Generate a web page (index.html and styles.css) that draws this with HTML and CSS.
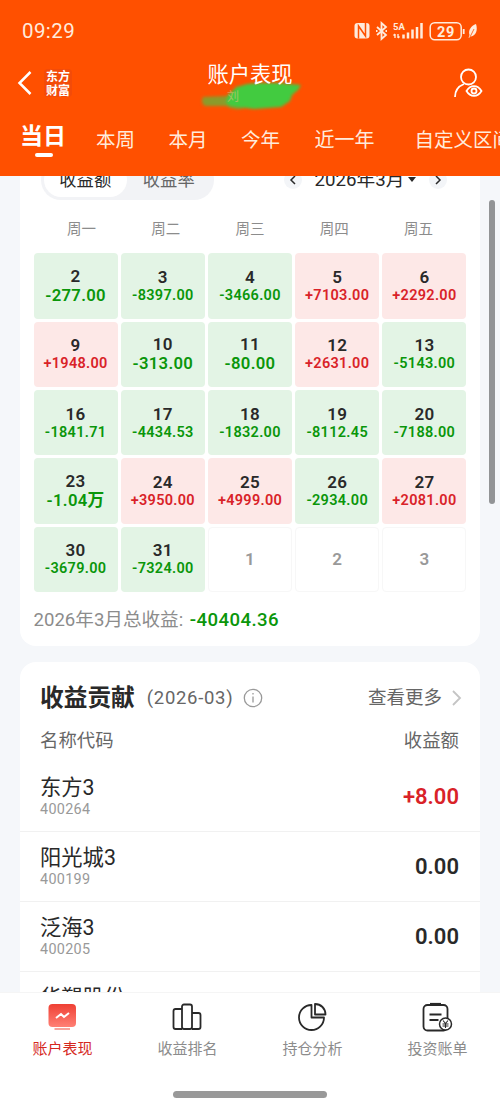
FILE: index.html
```html
<!DOCTYPE html>
<html lang="zh-CN">
<head>
    <meta charset="UTF-8">
    <title>账户表现</title>
    <link rel="stylesheet" href="styles.css">
</head>
<body>

<header class="header">
    <div class="status">
        <span class="time">09:29</span>
        <svg class="status-icons" width="126" height="24" viewBox="0 0 126 24" fill="none" stroke="#ffebdc">
            <rect x="0.500" y="4" width="15" height="15.500" rx="3" fill="#ffebdc" stroke="none"/>
            <path d="M4.500 19.500V7l7 10V4" stroke="#ff5000" stroke-width="1.500"/>
            <path d="M23 8l9 8-4.500 4V4l4.500 4-9 8M22 12h1.500M31.500 12h1.500" stroke-width="1.800"/>
            <path d="M41 15v4M39.500 16.500l1.500-1.500M44 19v-4M44 19l1.500-1.500" stroke-width="1.400"/>
            <path d="M49.500 19.500v-4M54 19.500v-6M58.500 19.500v-9M63 19.500V8M67.500 19.500V4" stroke-width="2.500"/>
            <text x="39" y="11" class="net">5A</text>
            <rect x="76.200" y="3.700" width="31" height="17" rx="4.500" stroke-width="1.500"/>
            <text x="92" y="17.500" class="battery" text-anchor="middle">29</text>
            <path d="M109.700 10v5" stroke-width="1.800"/>
            <path d="M122 5c-5 2-8 6-6.500 11l-1 3 2.500-1.500c5-1 7-6 5-12.500z" fill="#ffebdc" stroke="none"/>
            <path d="M116 18l4-8" stroke="#ff5000" stroke-width=".8"/>
        </svg>
    </div>

    <div class="nav">
        <div class="nav-left">
            <svg width="16" height="26" viewBox="0 0 16 26" fill="none" stroke="#fff" stroke-width="2.500"><path d="M14.500 2L3.500 13l11 11"/></svg>
            <span class="logo">东方<br>财富</span>
        </div>
        <div class="title">
            <h1>账户表现</h1>
            <svg class="scribble" width="108" height="36" viewBox="0 0 108 36">
                <path d="M4 18Q1 24 6 27L27 27Q36 32 46 29L60 14L38 7L28 17Z" fill="#8b9b2b"/>
                <path d="M27 24L29 16L38 8L48 5L60 4L80 4L102 6L99 11L93 16L91 22L82 28L55 30L40 28L31 27Z" fill="#42cb40"/>
            </svg>
            <span class="account">刘</span>
        </div>
        <svg class="user" width="32" height="32" viewBox="0 0 32 32" fill="none" stroke="#fff" stroke-width="1.800">
            <circle cx="16.500" cy="9" r="7.500"/>
            <path d="M3 29c0-7 4-11 9-13"/>
            <path d="M14.500 23c4-6.500 11-6.500 15 0-4 6.500-11 6.500-15 0z"/>
            <circle cx="22" cy="23" r="2.500"/>
        </svg>
    </div>

    <nav class="periods">
        <span class="active">当日</span>
        <span>本周</span>
        <span>本月</span>
        <span>今年</span>
        <span class="long">近一年</span>
        <span class="custom">自定义区间</span>
    </nav>
</header>

<main class="content">
    <section class="card calendar-card">
        <div class="toolbar">
            <div class="switch"><span class="on">收益额</span><span>收益率</span></div>
            <div class="month">
                <span class="arrow"><svg width="8" height="10" viewBox="0 0 8 10"><path d="M6 1L2 5l4 4"/></svg></span>
                <span class="month-name">2026年3月<i></i></span>
                <span class="arrow"><svg width="8" height="10" viewBox="0 0 8 10"><path d="M2 1l4 4-4 4"/></svg></span>
            </div>
        </div>
        <div class="weekdays"><span>周一</span><span>周二</span><span>周三</span><span>周四</span><span>周五</span></div>
        <div class="days">
            <div class="day down big"><b>2</b><span>-277.00</span></div>
            <div class="day down"><b>3</b><span>-8397.00</span></div>
            <div class="day down"><b>4</b><span>-3466.00</span></div>
            <div class="day up"><b>5</b><span>+7103.00</span></div>
            <div class="day up"><b>6</b><span>+2292.00</span></div>
            <div class="day up"><b>9</b><span>+1948.00</span></div>
            <div class="day down big"><b>10</b><span>-313.00</span></div>
            <div class="day down big"><b>11</b><span>-80.00</span></div>
            <div class="day up"><b>12</b><span>+2631.00</span></div>
            <div class="day down"><b>13</b><span>-5143.00</span></div>
            <div class="day down"><b>16</b><span>-1841.71</span></div>
            <div class="day down"><b>17</b><span>-4434.53</span></div>
            <div class="day down"><b>18</b><span>-1832.00</span></div>
            <div class="day down"><b>19</b><span>-8112.45</span></div>
            <div class="day down"><b>20</b><span>-7188.00</span></div>
            <div class="day down big"><b>23</b><span>-1.04万</span></div>
            <div class="day up"><b>24</b><span>+3950.00</span></div>
            <div class="day up"><b>25</b><span>+4999.00</span></div>
            <div class="day down"><b>26</b><span>-2934.00</span></div>
            <div class="day up"><b>27</b><span>+2081.00</span></div>
            <div class="day down"><b>30</b><span>-3679.00</span></div>
            <div class="day down"><b>31</b><span>-7324.00</span></div>
            <div class="day next"><b>1</b></div>
            <div class="day next"><b>2</b></div>
            <div class="day next"><b>3</b></div>
        </div>
        <p class="total">2026年3月总收益: <strong>-40404.36</strong></p>
    </section>

    <section class="card contribution">
        <div class="card-head">
            <h2>收益贡献</h2>
            <span class="range">(2026-03)</span>
            <svg width="20" height="20" viewBox="0 0 20 20" fill="none" stroke="#999" stroke-width="1.300"><circle cx="10" cy="10" r="8.700"/><path d="M10 8.500v6M10 5v1.600"/></svg>
            <span class="more">查看更多</span>
            <svg width="12" height="16" viewBox="0 0 12 16" fill="none" stroke="#c4c4c4" stroke-width="1.800"><path d="M2 1l7 7-7 7"/></svg>
        </div>
        <div class="columns"><span>名称代码</span><span>收益额</span></div>
        <div class="stock"><div><h3>东方3</h3><p>400264</p></div><strong class="gain">+8.00</strong></div>
        <div class="stock"><div><h3>阳光城3</h3><p>400199</p></div><strong>0.00</strong></div>
        <div class="stock"><div><h3>泛海3</h3><p>400205</p></div><strong>0.00</strong></div>
        <div class="stock"><div><h3>华塑股份</h3></div></div>
    </section>
    <div class="scrollbar"></div>
</main>

<footer class="tabbar">
    <div class="tabs">
        <div class="tab current">
            <svg width="32" height="32" viewBox="0 0 32 32" fill="none">
                <defs><linearGradient id="screen" x2="0" y2="1"><stop stop-color="#ef4034"/><stop offset="1" stop-color="#ff8075"/></linearGradient></defs>
                <rect x="2.500" y="3" width="27.500" height="23" rx="4" fill="url(#screen)"/>
                <path d="M10 17l5-4 3 3 5-4" stroke="#fff" stroke-width="2"/>
                <path d="M8.500 28H24" stroke="#f79a91" stroke-width="1.800"/>
            </svg>
            <span>账户表现</span>
        </div>
        <div class="tab">
            <svg width="32" height="32" viewBox="0 0 32 32" fill="none" stroke="#292929" stroke-width="1.800">
                <path d="M11 28H4.500q-2 0-2-2V10q0-2 2-2H11M21 12h6.500q2 0 2 2v12q0 2-2 2H21"/>
                <rect x="11" y="3.500" width="10" height="24.500" rx="2"/>
            </svg>
            <span>收益排名</span>
        </div>
        <div class="tab">
            <svg width="32" height="32" viewBox="0 0 32 32" fill="none" stroke="#292929" stroke-width="1.800" stroke-linejoin="round">
                <path d="M15.500 4A12.500 12.500 0 1 0 28 16.500H15.500z"/>
                <path d="M19 3v10.500h10.500C29.500 7.500 25 3 19 3z"/>
            </svg>
            <span>持仓分析</span>
        </div>
        <div class="tab">
            <svg width="32" height="32" viewBox="0 0 32 32" fill="none" stroke="#292929" stroke-width="1.800">
                <rect x="2.500" y="4" width="24" height="25.500" rx="4"/>
                <path d="M9 3h11" stroke-width="2.200"/>
                <path d="M8.500 13.500h12M8.500 19h9"/>
                <circle cx="24.500" cy="23" r="6" fill="#fff" stroke-width="1.500"/>
                <path d="M22 19.500l2.500 3 2.500-3M24.500 22.500v4.500M21.500 23h6M21.500 25h6" stroke-width="1.100"/>
            </svg>
            <span>投资账单</span>
        </div>
    </div>
    <div class="home-bar"></div>
</footer>

</body>
</html>
```
FILE: styles.css
```css
* {
    box-sizing: border-box;
}
body {
    margin: 0;
    width: 500px;
    height: 1106px;
    overflow: hidden;
    font-family: Roboto, "Noto Sans CJK SC", sans-serif;
    color: #292929;
    background: #f5f7fa;
}
h1, h2, h3, p {
    margin: 0;
    font-weight: 400;
}
svg {
    display: block;
    flex: none;
}

/* header */
.header {
    height: 176px;
    background: #ff5000;
    color: #fff;
}
.status {
    height: 58px;
    padding: 4px 20px 0 22px;
    display: flex;
    align-items: center;
    justify-content: space-between;
}
.time {
    font-size: 20.5px;
    letter-spacing: 0.4px;
    color: #ffebdc;
}
.net, .battery {
    font-weight: 700;
    fill: #ffebdc;
    stroke: none;
}
.net {
    font-size: 9.5px;
}
.battery {
    font-size: 14.5px;
    letter-spacing: 0.6px;
}
.nav {
    height: 57px;
    padding: 0 16px;
    display: flex;
    justify-content: space-between;
}
.nav-left {
    display: flex;
    align-items: center;
    width: 60px;
    height: 50px;
    gap: 12px;
}
.logo {
    font-family: "Noto Sans CJK SC", sans-serif;
    font-size: 12px;
    line-height: 14px;
    font-weight: 700;
    white-space: nowrap;
    background: #f34b09;
    border-radius: 4px;
    padding: 0 2px;
}
.title {
    position: relative;
    width: 100px;
    text-align: center;
}
.title h1 {
    position: relative;
    z-index: 1;
    font-size: 21.3px;
    line-height: 33px;
    white-space: nowrap;
}
.account {
    position: relative;
    display: block;
    font-size: 12px;
    line-height: 12px;
    text-align: left;
    padding-left: 27px;
    color: rgba(255, 190, 140, 0.5);
}
.scribble {
    position: absolute;
    left: -1px;
    top: 21px;
    filter: blur(1.5px);
}
.user {
    margin: 10px 0 0 28px;
}
.periods {
    display: flex;
    align-items: center;
    height: 48px;
    padding-left: 20px;
    font-size: 19.5px;
    white-space: nowrap;
    overflow: hidden;
    color: #ffebdc;
}
.periods span {
    flex: none;
    width: 72.5px;
    margin-top: -2px;
}
.periods .active {
    position: relative;
    width: 76px;
    font-size: 23px;
    line-height: 42px;
    font-weight: 700;
    color: #fff;
    margin-top: -4px;
}
.periods .active::after {
    content: "";
    position: absolute;
    left: 15px;
    top: 37px;
    width: 18px;
    height: 4px;
    border-radius: 2px;
    background: #fff;
}
.periods .long {
    margin-left: 1px;
    width: 100px;
    font-size: 20px;
}
.periods .custom {
    width: 110px;
}

/* scrolling part */
.content {
    position: relative;
    height: 816px;
    padding: 0 20px;
    overflow: hidden;
}
.card {
    background: #fff;
    border-radius: 16px;
}
.calendar-card {
    height: 486px;
    margin-top: -16px;
    padding: 0 13.5px;
}
.toolbar {
    display: flex;
    justify-content: space-between;
    height: 55px;
    padding: 0 20px 0 7px;
}
.switch {
    display: flex;
    width: 173px;
    height: 40px;
    padding: 3px;
    border-radius: 20px;
    background: #f2f3f6;
    font-size: 17.3px;
    line-height: 34px;
    text-align: center;
    color: #666;
}
.switch span {
    flex: 1;
}
.switch .on {
    background: #fff;
    border-radius: 17px;
    color: #292929;
}
.month {
    display: flex;
    align-items: center;
    height: 40px;
    gap: 13px;
}
.arrow {
    width: 18px;
    height: 18px;
    border-radius: 50%;
    background: #f3f5f8;
    display: flex;
    align-items: center;
    justify-content: center;
}
.arrow path {
    fill: none;
    stroke: #292929;
    stroke-width: 1.5;
}
.month-name {
    display: flex;
    align-items: center;
    font-size: 18.7px;
    line-height: 20px;
    margin-top: -1px;
    white-space: nowrap;
}
.month-name i {
    border: 4.5px solid transparent;
    border-top: 5px solid #292929;
    border-bottom: 0;
    margin-left: 3px;
}
.weekdays {
    display: grid;
    grid-template-columns: repeat(5, 1fr);
    height: 38.4px;
    padding: 0 6px;
    font-size: 14.5px;
    line-height: 29px;
    text-align: center;
    color: #8c8c8c;
}
.days {
    display: grid;
    grid-template-columns: repeat(5, 1fr);
    grid-auto-rows: 65.3px;
    gap: 3px;
}
.day {
    display: flex;
    flex-direction: column;
    align-items: center;
    justify-content: center;
    padding-top: 1px;
    border-radius: 4px;
    font-size: 14.5px;
    line-height: 18px;
    font-weight: 600;
    letter-spacing: 0.3px;
}
.day b {
    font-size: 17px;
    line-height: 19px;
    letter-spacing: 0.3px;
    font-weight: 600;
    color: #292929;
}
.day.big {
    font-size: 16.7px;
    line-height: 20px;
}
.down {
    background: #e3f4e5;
    color: #0a960a;
}
.up {
    background: #fde8e7;
    color: #d92228;
}
.next {
    border: 1px solid #f7f7f7;
}
.day.next b {
    color: #999;
}
.total {
    margin-top: 13px;
    font-size: 18.6px;
    line-height: 30px;
    color: #8c8c8c;
}
.total strong {
    font-weight: 500;
    letter-spacing: 0.4px;
    color: #0a960a;
    margin-left: 2px;
}

/* contribution list */
.contribution {
    margin-top: 16px;
    height: 400px;
}
.card-head {
    display: flex;
    align-items: center;
    height: 71px;
    padding: 0 17px 0 20px;
}
.card-head h2 {
    font-size: 23.7px;
    line-height: 30px;
    font-weight: 700;
}
.range {
    margin: 0 10px 0 12px;
    font-size: 18.5px;
    letter-spacing: 0.7px;
    color: #666;
}
.more {
    margin: 0 9px 0 auto;
    font-size: 18.5px;
    line-height: 26px;
    color: #666;
}
.columns {
    display: flex;
    justify-content: space-between;
    height: 29px;
    padding: 0 21px 0 20px;
    font-size: 18.4px;
    line-height: 15px;
    color: #666;
}
.stock {
    display: flex;
    justify-content: space-between;
    height: 70px;
    padding: 11px 21px 0 20px;
    border-bottom: 1px solid #f1f1f1;
}
.stock h3 {
    font-size: 21.3px;
    line-height: 29px;
}
.stock p {
    font-size: 14.4px;
    line-height: 15px;
    letter-spacing: 0.3px;
    color: #999;
}
.stock strong {
    font-size: 22px;
    line-height: 47px;
    font-weight: 600;
}
.stock .gain {
    color: #d92228;
}
.scrollbar {
    position: absolute;
    right: 5px;
    top: 24px;
    width: 6px;
    height: 304px;
    border-radius: 3px;
    background: #929496;
}

/* bottom bar */
.tabbar {
    height: 114px;
    background: #fff;
    border-top: 1px solid #f5f5f5;
}
.tabs {
    display: grid;
    grid-template-columns: repeat(4, 1fr);
    height: 98px;
    padding-top: 8px;
}
.tab {
    display: flex;
    flex-direction: column;
    align-items: center;
    font-size: 15px;
    line-height: 33px;
    color: #8c8c8c;
}
.tab svg {
    margin-left: -1px;
}
.tab.current {
    color: #d5281e;
}
.home-bar {
    width: 154px;
    height: 7px;
    margin: 0 auto;
    border-radius: 4px;
    background: #999;
}
```
